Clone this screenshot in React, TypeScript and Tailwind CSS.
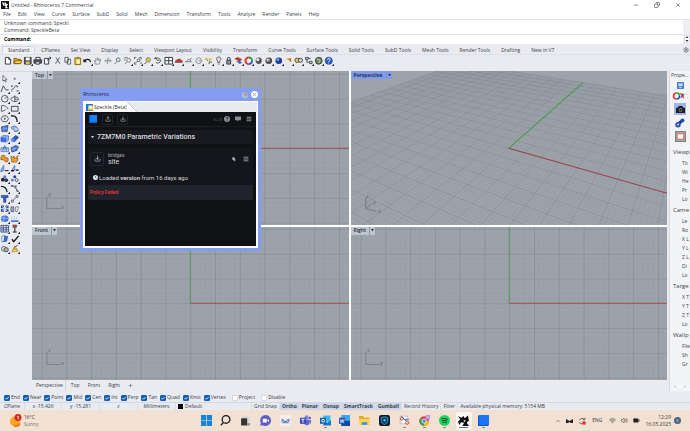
import type { ReactNode } from "react";
import { Battery, ChevronUp, Copy, Download, Menu, Minus, Plus, Settings, Upload, Volume2, Wifi, X } from "lucide-react";

const menus = ["File", "Edit", "View", "Curve", "Surface", "SubD", "Solid", "Mesh", "Dimension", "Transform", "Tools", "Analyze", "Render", "Panels", "Help"];

const toolTabs = ["Standard", "CPlanes", "Set View", "Display", "Select", "Viewport Layout", "Visibility", "Transform", "Curve Tools", "Surface Tools", "Solid Tools", "SubD Tools", "Mesh Tools", "Render Tools", "Drafting", "New in V7"];

const osnaps = ["End", "Near", "Point", "Mid", "Cen", "Int", "Perp", "Tan", "Quad", "Knot", "Vertex", "Project", "Disable"];

// Short labels, the panel is collapsed to its narrowest width.
const properties = [
    { title: "Viewp", rows: ["Tit", "Wi", "He", "Pr", "Lo"] },
    { title: "Came", rows: ["Le", "Ro", "X L", "Y L", "Z L", "Di", "Lo"] },
    { title: "Targe", rows: ["X T", "Y T", "Z T", "Lo"] },
    { title: "Wallp", rows: ["File", "Sh", "Gr"] },
];

const INK = "#33373d";
const BLUE = "#2450b8";
const SKY = "#8fb2ee";

/* ---------- toolbar glyphs, each on a 10x10 grid ---------- */

interface Glyph {
    name: string;
    art: ReactNode;
    flyout?: boolean;
}

const standardTools: Glyph[] = [
    { name: "New", art: <path d="M2.5 1.5h3.5l2 2v5h-5.500zM6 1.500v2h2" fill="#fff" stroke={INK} /> },
    { name: "Open", art: <><path d="M1 8V2.500h3l1 1h3V8z" fill="#e8a820" stroke="#8a5c0c" /><path d="M1 8l1.500-3h7L8 8z" fill="#ffd45e" stroke="#8a5c0c" /></> },
    { name: "Save", flyout: true, art: <><path d="M1.500 1.500h7v7h-7z" fill="#5d636c" stroke={INK} /><path d="M3 1.500h4v3H3z" fill="#fff" /><path d="M3 6h4v2.500H3z" fill="#e6bd4a" /></> },
    { name: "Print", art: <><path d="M3 4V1.500h4.500V4" fill="#fff" stroke={INK} /><path d="M1 4h8v3.500H1z" fill="#555a61" stroke={INK} /><path d="M3 6h4v2.500H3z" fill="#fff" stroke={INK} /></> },
    { name: "Export", art: <><path d="M1.500 2.500H6v6H1.500z" fill="#fff" stroke={INK} /><path d="M5 5c0-2 1-3 3-3M7 .8L8.500 2 7 3.500" fill="none" stroke={INK} /></> },
    { name: "Cut", art: <path d="M3 1.500l4 6M7 1.500l-4 6M2.500 7.500h1M6.500 7.500h1" fill="none" stroke={INK} strokeWidth=".8" /> },
    { name: "Copy", art: <path d="M2 1.500h3.500v5H2zM4.500 3.500H8v5H4.500z" fill="#fff" stroke={INK} strokeWidth=".8" /> },
    { name: "Paste", art: <><path d="M2 2h6v7H2z" fill="#edc747" stroke="#8a6a16" /><path d="M3.500 1h3v1.500h-3z" fill="#777" /><path d="M4 4h3v4H4z" fill="#fff7c8" /></> },
    { name: "Undo", flyout: true, art: <path d="M1 3.500v2.500h2.500M1.500 5.500C3.500 2.500 7.500 3 8 6.500" fill="none" stroke="#111" strokeWidth="1.200" /> },
    { name: "Pan", art: <path d="M2.500 8.500L1.500 5l1.500.5V2.500M4.500 5V1.500M6 5V2M7.500 5V3v3L6.500 8.500h-4" fill="none" stroke="#777" strokeWidth=".8" /> },
    { name: "Rotate view", art: <path d="M2 5h6.500M5.500 1.500L4.500 8.500M7 3.500L8.500 5 7 6.500M3 6L2 5l1-1" fill="none" stroke="#777" strokeWidth=".8" /> },
    { name: "Zoom", art: <path d="M4 6L1.500 8.500M7.500 4a2 2 0 1 1-4 0 2 2 0 1 1 4 0" fill="#dfe5ee" stroke="#666" /> },
    { name: "Zoom window", flyout: true, art: <path d="M2 5V1.500h3M4.500 6L2 8.500M8 4.500a2 2 0 1 1-4 0 2 2 0 1 1 4 0" fill="none" stroke="#666" strokeWidth=".8" /> },
    { name: "Zoom extents", flyout: true, art: <path d="M1.500 3.500v-2h2M6.500 1.500h2v2M3.500 8.500h-2v-2M4.500 5.500l-2 2M7.500 4.500a1.500 1.500 0 1 1-3 0 1.500 1.500 0 1 1 3 0M8.500 6.500v2" fill="none" stroke="#444" strokeWidth=".8" /> },
    { name: "Zoom selected", flyout: true, art: <><path d="M4 6L1.500 8.500" stroke="#444" /><circle cx="5.500" cy="4" r="2.300" fill="#f5c748" stroke="#777" /></> },
    { name: "Undo view", flyout: true, art: <path d="M1 3l2-1.500L4 4M2 3c3-2 6 0 6 2S5 8 3 7M4 4.500h3" fill="none" stroke="#444" strokeWidth=".9" /> },
    { name: "Four viewports", flyout: true, art: <><path d="M1 1.500h8v7H1z" fill="#fff" stroke={INK} /><path d="M5 1.500v7M1 5h8" stroke={INK} /></> },
    { name: "Set CPlane", flyout: true, art: <><path d="M1 6l1-2h1.500l1-1.200h2L8 4.500h1V6z" fill="#cf2c1e" /><path d="M1 6.500h8" stroke="#333" /></> },
    { name: "Named views", flyout: true, art: <path d="M1 6h7M3 5l2-1.500L7.500 5M6 3.500l2-1" fill="none" stroke="#777" /> },
    { name: "Circle centre", flyout: true, art: <path d="M8 5a3 3 0 1 1-6 0 3 3 0 1 1 6 0M4.500 5h3" fill="none" stroke="#777" strokeWidth=".8" /> },
    { name: "Lights", flyout: true, art: <><path d="M1.500 3l3 2M6.500 5L5 8.500" stroke="#555" /><circle cx="2.500" cy="3" r="1.200" fill="#e7bd3b" /><circle cx="6.500" cy="3.500" r="1.500" fill="#e7bd3b" /><circle cx="7.500" cy="6.500" r="1" fill="#7ca0d8" /></> },
    { name: "Spotlight", flyout: true, art: <path d="M5 1a2.200 2.200 0 0 1 1 4.200V7H4V5.200A2.200 2.200 0 0 1 5 1zM4 8.500h2" fill="#ddd" stroke="#666" /> },
    { name: "Lock", flyout: true, art: <><path d="M3.500 4.500V3a1.500 1.500 0 0 1 3 0v1.500" fill="none" stroke={INK} /><path d="M3 4.500h4v4H3z" fill="#999" stroke={INK} /></> },
    { name: "Layers", flyout: true, art: <><path d="M1 3l3-1.500 4 2-2 2z" fill="#d8352a" stroke="#6a1410" strokeWidth=".5" /><path d="M2.500 5.500L6 5l2.500 2-2.500 1.500z" fill="#3269d6" /><path d="M2 4.500L4 6l-1 1z" fill="#f0b429" /></> },
    { name: "Colors", flyout: true, art: <><path d="M5 1.500A3.500 3.500 0 0 1 8.500 5" stroke="#2b9c38" fill="none" strokeWidth="2" /><path d="M8.500 5A3.500 3.500 0 0 1 5 8.500" stroke="#2450d8" fill="none" strokeWidth="2" /><path d="M5 8.500A3.500 3.500 0 0 1 5 1.500" stroke="#df3325" fill="none" strokeWidth="2" /><circle cx="5" cy="5" r="2" fill="#fff" /></> },
    { name: "Shade", flyout: true, art: <><circle cx="5" cy="5" r="3.300" fill="#555" /><circle cx="4" cy="3.800" r="1.700" fill="#e4e4e4" /></> },
    { name: "Render", flyout: true, art: <><circle cx="5" cy="5" r="3.500" fill="#444" /><circle cx="4.300" cy="4.300" r="2.200" fill="#8f8f8f" /><circle cx="3.800" cy="3.800" r="1" fill="#eee" /></> },
    { name: "Render preview", flyout: true, art: <><circle cx="5" cy="5" r="3.500" fill="#153f9c" /><circle cx="4" cy="3.800" r="1.500" fill="#7fa8ff" /></> },
    { name: "Flag", flyout: true, art: <><path d="M1.500 2.500h3L8 2l-1 4-2-1.500z" fill="#e0a52c" /><path d="M5.500 2.500L7.500 6" stroke="#bd2b20" /></> },
    { name: "Options", flyout: true, art: <><circle cx="3.300" cy="4.500" r="2.300" fill="#e6ce70" stroke="#5b4c1c" /><circle cx="6.800" cy="4.500" r="2.200" fill="#d5d5d5" stroke="#444" /></> },
    { name: "Grasshopper", flyout: true, art: <path d="M1.500 1.500h3v2h-3zM3 3.500v3h3M6 5.500h2.500v2.500H6zM4.500 2.500H7" fill="none" stroke={INK} strokeWidth=".9" /> },
    { name: "Camera", flyout: true, art: <><circle cx="5" cy="5" r="3.600" fill="#6d8562" stroke="#39462f" /><path d="M3 3l3.500 1.500L5 7.500" stroke="#b9d0ab" fill="none" /></> },
    { name: "Help", flyout: true, art: <><circle cx="5" cy="5" r="3.800" fill="#2b5bc7" stroke="#173a86" strokeWidth=".6" /><path d="M3.700 4c0-2 2.800-1.800 2.600-.2C6.200 4.800 5 4.700 5 6M5 7v.8" stroke="#fff" fill="none" /></> },
];

const cube = <><path d="M1 3.500L3.500 1.500 9 2v4.500L6.500 8.500 1 8z" fill={SKY} stroke={BLUE} strokeWidth=".6" /><path d="M1 3.500l5.500.5v4.500L1 8z" fill="#3b6bd6" /></>;

const sideTools: Glyph[] = [
    { name: "Select", art: <path d="M3 1.500v6l1.500-1.200L5.500 8.500l1-.5-1-2h2z" fill="#fff" stroke={INK} strokeWidth=".7" /> },
    { name: "Point", flyout: true, art: <circle cx="5" cy="5" r=".8" fill="none" stroke={INK} strokeWidth=".6" /> },
    { name: "Polyline", flyout: true, art: <path d="M1 8.500L3.500 2l3 4.500 2.500-.5" fill="none" stroke={INK} strokeWidth=".9" /> },
    { name: "Curve", flyout: true, art: <><path d="M2 8C1 4 4 6 4.500 4S7 1 8 2.500" fill="none" stroke={INK} strokeWidth=".8" /><path d="M1 1.500h2v1.500H1zM7 6.500h2V8H7zM7 2h1.500v1.500H7z" fill="#555" /></> },
    { name: "Circle", flyout: true, art: <path d="M8.500 5a3.500 3.500 0 1 1-7 0 3.500 3.500 0 1 1 7 0M5 5l2-2" fill="none" stroke={INK} strokeWidth=".8" /> },
    { name: "Ellipse", flyout: true, art: <path d="M9 5.500c0 1.500-2 2.500-4 2.500S1 7 1 5.500 3 3 5 3s4 1 4 2.500M5 1.500V8M5 5.500h3" fill="none" stroke={INK} strokeWidth=".8" /> },
    { name: "Arc", flyout: true, art: <path d="M2 1.500c4 0 6 2 6.500 4M2 8l4-2M1.500 1.500V8" fill="none" stroke={INK} strokeWidth=".8" /> },
    { name: "Rectangle", flyout: true, art: <path d="M1.500 2.500h7v5h-7z" fill="none" stroke={INK} strokeWidth=".9" /> },
    { name: "Polygon", flyout: true, art: <path d="M3 2h4l2 3-2 3H3L1 5zM4 5h2M5 4v2" fill="none" stroke={INK} strokeWidth=".8" /> },
    { name: "Fillet curves", flyout: true, art: <path d="M1 2h2c3 0 4.500 2 4.500 6.500" fill="none" stroke="#111" strokeWidth="1.300" /> },
    { name: "Surface from points", flyout: true, art: <><path d="M1.500 3L8.500 1.500 7.500 8 2 8z" fill="#4d7be0" stroke="#222" strokeWidth=".6" /><path d="M4 2.500v5.500M2 5.500l6-1" stroke={SKY} strokeWidth=".6" /></> },
    { name: "Sweep", flyout: true, art: <><path d="M1 4c2-3 6-2 7.500 1v2.500L5 8c0-2-2-2-4-4z" fill={SKY} stroke="#33558e" strokeWidth=".6" /><path d="M5 5l3 .5" stroke="#fff" /></> },
    { name: "Box", flyout: true, art: cube },
    { name: "Sphere chain", flyout: true, art: <><path d="M1 6l5-4.500L9 3.500 4.500 8.500z" fill="#2c57c0" stroke="#142e6e" strokeWidth=".6" /><circle cx="3" cy="6.500" r="2" fill="#5e8cec" /></> },
    { name: "SubD", flyout: true, art: <><path d="M1 4h8v4H1z" fill="#a7c0ee" stroke="#4b6fb5" strokeWidth=".7" /><path d="M3 6.500L5 1.500l2 5M3 4h4" stroke="#335ea8" fill="none" strokeWidth=".7" /></> },
    { name: "Mesh", flyout: true, art: <><path d="M1 4L6 1.500 9 3 7 7 2 8.500z" fill="#4774d4" stroke="#1c3268" strokeWidth=".6" /><path d="M3 3l2 4M2 6l5-2" stroke="#c5d6fa" strokeWidth=".6" /></> },
    { name: "Join", flyout: true, art: <path d="M2 1.500h3v2l3.500 1v3L6 8.500 3.500 6H1V3.500z" fill="#ee9a25" stroke="#6e4b16" strokeWidth=".7" /> },
    { name: "Explode", flyout: true, art: <path d="M1 2l2 2 1-2 1 3 3.500-3.500L7 5h1.500L7 8.500H2z" fill="#f0a52c" stroke="#8a3d12" strokeWidth=".7" /> },
    { name: "Trim", flyout: true, art: <><path d="M4 1.500v5L1 8.500V6z" fill={SKY} stroke={BLUE} strokeWidth=".6" /><path d="M5 7h4" stroke="#111" /></> },
    { name: "Split", flyout: true, art: <><path d="M5 1.500v5L2.500 8V5.500z" fill={SKY} stroke={BLUE} strokeWidth=".6" /><path d="M1 7h3M6 6.500h3" stroke="#111" strokeWidth="1.300" /></> },
    { name: "Group", flyout: true, art: <><circle cx="3" cy="6" r="2" fill="#222" /><circle cx="6.500" cy="6.500" r="2" fill="#25386a" /><circle cx="5" cy="3" r="1.600" fill="#5679c8" /></> },
    { name: "Ungroup", flyout: true, art: <><circle cx="2.500" cy="6.500" r="1.400" fill="#4c77d4" /><circle cx="7" cy="6.500" r="1.500" fill="none" stroke={INK} strokeWidth=".8" /><circle cx="5" cy="3" r="1.600" fill="#27438c" /></> },
    { name: "Edit points", flyout: true, art: <path d="M1 2.500c4 0 6 2 6.500 6" fill="none" stroke="#111" strokeWidth="1.200" /> },
    { name: "Control points", flyout: true, art: <><path d="M2 2c3 0 4 2 6 6" fill="none" stroke={INK} /><path d="M1 1h2v2H1zM5 1.500h2v2H5zM7 6.500h2v2H7z" fill="#666" /></> },
    { name: "Text", flyout: true, art: <path d="M1.500 1.500h7v2.200H6.200v5H3.800v-5H1.500z" fill="#2f5fce" stroke="#17346f" strokeWidth=".6" /> },
    { name: "Dimension", flyout: true, art: <><path d="M3 7l4-4" stroke={INK} strokeWidth=".7" /><path d="M1.500 6.500h2v2h-2zM6.500 1.500h2v2h-2z" fill="#fff" stroke={INK} strokeWidth=".7" /></> },
    { name: "Blocks", flyout: true, art: <><path d="M1 1.500h3v3H1zM6 1.500h3v3H6zM1 5.500h3v3H1zM6 5.500h3v3H6z" fill="#27438c" /><path d="M2 2l6 6M8 2L2 8" stroke="#bcd0f5" /></> },
    { name: "Array", flyout: true, art: <><path d="M1 3h3v5H1z" fill="#8fa9dc" stroke={INK} strokeWidth=".6" /><path d="M6 3h3L7.500 8H6z" fill="#fff" stroke={INK} strokeWidth=".6" /></> },
    { name: "Cage", flyout: true, art: <><ellipse cx="5" cy="5" rx="4" ry="3.500" fill="#3f71d8" /><path d="M1 4.500h8M4 1.500v7" stroke="#9fbcf5" /></> },
    { name: "Heightfield", flyout: true, art: <><path d="M1 7.500h8" stroke="#2d5fd0" strokeWidth="1.500" /><path d="M2 5.500V3M4.500 5.500V2M7 5.500V3" stroke="#8aa5da" strokeDasharray="1 1" /></> },
    { name: "Grid", flyout: true, art: <><path d="M1 1.500h8v7H1z" fill="#e8effc" stroke="#22396e" strokeWidth=".8" /><path d="M3.500 1.500v7M6.500 1.500v7M1 4h8M1 6.200h8" stroke="#22396e" strokeWidth=".8" /></> },
    { name: "Align", flyout: true, art: <><path d="M3 1h4v2.500H3z" fill="#c8452d" stroke="#444" strokeWidth=".5" /><path d="M5 3v5M3 8.500h4" stroke="#555" strokeWidth="1.500" /></> },
    { name: "Bend", flyout: true, art: <><path d="M2 2.500l3-1v6l-3 1z" fill="#fff" stroke="#315eb8" strokeWidth=".7" /><path d="M5 2.500h3l-1 5-3 .5z" fill="#3d70dc" stroke="#173a86" strokeWidth=".6" /></> },
    { name: "Check", flyout: true, art: <path d="M2 5.500L4 8l5-6" fill="none" stroke="#111" strokeWidth="1.400" /> },
    { name: "Boolean", flyout: true, art: <><circle cx="4" cy="5" r="2.500" fill="#ddd" stroke={INK} strokeWidth=".7" /><circle cx="6.500" cy="6" r="2.300" fill="#aaa" stroke={INK} strokeWidth=".7" /></> },
    { name: "Cone", flyout: true, art: <><path d="M5 2l3.500 5.500L2 8.500z" fill="#f0a52c" stroke="#8a5c0c" strokeWidth=".6" /><path d="M6 3l2-2" stroke="#333" /><path d="M2 8l3-2 3 1.500" fill="#fbe08a" /></> },
];

const taskApps: Glyph[] = [
    { name: "Start", art: <path d="M0 0h4.700v4.700H0zM5.300 0H10v4.700H5.300zM0 5.300h4.700V10H0zM5.300 5.300H10V10H5.300z" fill="#1583d8" /> },
    { name: "Search", art: <path d="M9 4a3.500 3.500 0 1 1-7 0 3.500 3.500 0 1 1 7 0M3 6.800L.8 9.300" fill="none" stroke="#1d1d1d" strokeWidth="1.200" /> },
    { name: "Task view", art: <><path d="M2.500 1H9v7H2.500z" fill="#d8d8d8" /><path d="M1 3h5.500v6.500H1z" fill="#333" /><path d="M6.500 7.500H9v2H6.500z" fill="#888" /></> },
    { name: "Chat", art: <><path d="M5 0a5 5 0 1 1-2.500 9.300L.3 9.800.8 7.500A5 5 0 0 1 5 0z" fill="#5b5fc7" /><path d="M2.500 3.300h3.700v3.500H2.500zM6.500 5l1.700-1.200v2.600z" fill="#fff" /></> },
    { name: "Mail", art: <><rect width="10" height="10" rx="1" fill="#f3f0f4" /><path d="M1.500 3v4.500h7V3L5 5.500z" fill="#7384b8" /><path d="M1.500 7.500L4 5M8.500 7.500L6 5" stroke="#fff" strokeWidth=".6" /></> },
    { name: "Teams", art: <><circle cx="6" cy="2" r="1.700" fill="#7b83eb" /><circle cx="8.800" cy="2.800" r="1.100" fill="#5059c9" /><path d="M4 4h4.500v3.500C8.500 10 4 10 4 7.500zM8.700 4.500H10v3L8.700 8z" fill="#6169d4" /><rect y="2.500" width="5.500" height="5.500" fill="#4049b0" /><path d="M1.200 4h3M2.700 4v3" stroke="#fff" strokeWidth=".8" /></> },
    { name: "Outlook", flyout: true, art: <><path d="M3 .5h6.500V6H3z" fill="#35b8f1" /><path d="M3 4.500l3.500 2.500L10 4.500v5H3z" fill="#1877c8" /><rect y="2.500" width="5.500" height="5.500" fill="#0f62b0" /><circle cx="2.800" cy="5.200" r="1.300" fill="none" stroke="#fff" strokeWidth=".8" /></> },
    { name: "Word", art: <><path d="M2 0h8v5H2z" fill="#41a5ee" /><path d="M2 5h8v5H2z" fill="#124aa8" /><rect y="2.500" width="5.500" height="5.500" fill="#185abd" /><path d="M1 4l.9 3 .9-3 .9 3 .9-3" stroke="#fff" fill="none" strokeWidth=".6" /></> },
    { name: "Explorer", art: <><path d="M0 1h3.500l1 1.200H9.500V9H0z" fill="#eba720" /><path d="M0 3.500h10V9H0z" fill="#ffd45a" /><path d="M2.500 6.500h5V9h-5z" fill="#3b97dc" /></> },
    { name: "Defender", art: <><rect width="10" height="10" rx="2" fill="#0b1b2c" /><path d="M5 1.500L8 2.500V5c0 2-1.500 3-3 3.700C3.500 8 2 7 2 5V2.500z" fill="#143c5e" stroke="#28a9d9" strokeWidth=".8" /><circle cx="5" cy="4.800" r="1" fill="#4fe0ff" /></> },
    { name: "Snipping", flyout: true, art: <><rect x="1" y="1" width="7" height="7" fill="#fff" stroke="#97a1ac" strokeWidth=".5" /><path d="M2 1l5 5M4.500 4L9 4" stroke="#4c8fd0" /><circle cx="7.500" cy="7" r="1.500" fill="none" stroke="#d9422f" strokeWidth=".8" /><circle cx="2.500" cy="3.500" r="1.300" fill="none" stroke="#d9422f" strokeWidth=".8" /></> },
    { name: "Chrome", flyout: true, art: <><circle cx="4.700" cy="5.500" r="4.400" fill="#ea4335" /><path d="M4.700 5.500L.8 3.500A4.400 4.400 0 0 0 4.500 9.900z" fill="#34a853" /><path d="M4.700 5.500h4.400a4.400 4.400 0 0 1-4.600 4.400z" fill="#fbbc05" /><circle cx="4.700" cy="5.500" r="1.900" fill="#4285f4" stroke="#fff" strokeWidth=".7" /><circle cx="8" cy="2" r="2" fill="#c9b2f2" stroke="#8d6bd6" strokeWidth=".6" /></> },
    { name: "Spotify", flyout: true, art: <><circle cx="5" cy="5" r="5" fill="#1ed760" /><path d="M2.200 3.500c2-.6 4-.4 5.800.5M2.600 5.200c1.600-.5 3.400-.3 4.900.5M3 6.800c1.300-.4 2.700-.2 3.900.5" fill="none" stroke="#123" strokeWidth=".8" /></> },
    { name: "Rhinoceros", flyout: true, art: <><rect width="10" height="10" fill="#fff" /><path d="M0 1l3 1.500L5 1l1 2 3-2.500L10 5 8 7l2 3H4L5.500 7 3 6.500 1 9 0 6l2-2z" fill="#111" /><path d="M5 4.500l2 .5-1 1.500z" fill="#fff" /></> },
    { name: "Speckle", flyout: true, art: <><path d="M0 1l1-1h9v9l-1 1H0z" fill="#0a54d0" /><path d="M1 0h9v9H1z" fill="#1a76f5" /></> },
];

function RhinoMark() {
    return (
        <svg viewBox="0 0 10 10" className="size-[8px]">
            <rect width="10" height="10" fill="#111" />
            <path d="M1 1l3 2 1-2 1.500 2.500L9 4 7 6.500 9 9H5l1-2.500L3 6z" fill="#fff" />
            <path d="M4 3.500l1.500 1L4.500 6z" fill="#111" />
        </svg>
    );
}

function ToolButton({ name, art, flyout }: Glyph) {
    return (
        <button type="button" aria-label={name} className="size-[10px] shrink-0">
            <svg viewBox="0 0 10 10" className="size-[10px]">
                <g transform="scale(.95)">{art}</g>
                {flyout && <path d="M10 7.800V10H7.800z" fill="#222" />}
            </svg>
        </button>
    );
}

/* ---------- viewports ---------- */

const MAJOR = 24.7;

function FlatGrid({ id, originY, vertical }: { id: string; originY: number; vertical: string }) {
    const minor = MAJOR / 5;
    const minorLines = [1, 2, 3, 4].map((n) => `M${n * minor} 0V${MAJOR}M0 ${n * minor}H${MAJOR}`).join("");

    return (
        <svg viewBox="0 0 317 153" preserveAspectRatio="xMidYMid slice" className="col-start-1 row-start-1 h-full w-full">
            <defs>
                <pattern id={id} x="158.500" y={originY} width={MAJOR} height={MAJOR} patternUnits="userSpaceOnUse">
                    <path d={minorLines} stroke="#939aa2" strokeWidth=".5" />
                    <path d={`M0 0H${MAJOR}M0 0V${MAJOR}`} stroke="#7f868e" strokeWidth="1.200" />
                </pattern>
            </defs>
            <rect width="317" height="153" fill={`url(#${id})`} />
            <path d={`M158.500 ${originY}V0`} stroke="#4b9b50" />
            <path d={`M158.500 ${originY}H317`} stroke="#a34b50" />
            <path d="M15.500 125V137H29" fill="none" stroke="#747b83" strokeWidth=".8" />
            <text x="17" y="125" fontSize="5" fill="#565c64">{vertical}</text>
            <text x="30" y="138" fontSize="5" fill="#565c64">{id === "right" ? "y" : "x"}</text>
        </svg>
    );
}

// Projects a construction plane point (-1..1 on both axes) through the two vanishing points.
function project(x: number, y: number) {
    const a = -0.355 * x;
    const b = 0.607 * y;
    const w = 1 + a + b;
    const px = (158 - 449 * a + 354 * b) / w;
    const py = (77 - 96 * a - 96 * b) / w;
    return `${px.toFixed(1)} ${py.toFixed(1)}`;
}

function gridPath(step: (n: number) => boolean) {
    let d = "";
    for (let n = -70; n <= 70; n++) {
        if (!step(n)) continue;
        const t = n / 70;
        d += `M${project(t, -1)}L${project(t, 1)}M${project(-1, t)}L${project(1, t)}`;
    }
    return d;
}

function PerspectiveGrid() {
    return (
        <svg viewBox="0 0 317 153" preserveAspectRatio="xMidYMid slice" className="col-start-1 row-start-1 h-full w-full">
            <path d={gridPath((n) => n % 5 !== 0)} stroke="#8f969e" strokeWidth=".3" />
            <path d={gridPath((n) => n % 5 === 0)} stroke="#80878f" strokeWidth=".5" />
            <path d={`M${project(0, 0)}L${project(0, 1)}`} stroke="#449b48" />
            <path d={`M${project(0, 0)}L${project(1, 0)}`} stroke="#a04046" />
            <path d="M15.500 126V137L26 140M15.500 137L22 132" fill="none" stroke="#6b7179" strokeWidth=".8" />
            <text x="16" y="127" fontSize="5" fill="#565c64">z</text>
            <text x="23" y="133" fontSize="5" fill="#565c64">y</text>
            <text x="28" y="142" fontSize="5" fill="#565c64">x</text>
        </svg>
    );
}

function Viewport({ title, active, children }: { title: string; active?: boolean; children: ReactNode }) {
    return (
        <section className="grid min-h-0 min-w-0 grid-cols-1 grid-rows-1 overflow-hidden bg-[#9ca3ab]">
            {children}
            <button
                type="button"
                className={`col-start-1 row-start-1 flex h-[8px] items-center gap-[3px] self-start justify-self-start pl-[3px] text-[#2c3036] ${active ? "bg-[#7f9bf3] font-bold" : "bg-[#bcc4cd] font-semibold"}`}
            >
                {title}
                <span className="flex h-[8px] w-[6px] items-center justify-center border-l border-[#8c949e]">
                    <svg viewBox="0 0 4 3" className="w-[3px]"><path d="M0 0h4L2 3z" fill="#333" /></svg>
                </span>
            </button>
        </section>
    );
}

/* ---------- Speckle connector window ---------- */

function SpeckleWindow() {
    return (
        <div role="dialog" aria-label="Rhinoceros" className="absolute top-[17px] left-[48px] flex h-[163px] w-[181px] flex-col bg-[#849df1] px-[3px] pb-[3px]">
            <header className="flex h-[13px] shrink-0 items-center gap-[3px] text-[#20263c]">
                <h2 className="flex-1">Rhinoceros</h2>
                <button type="button" aria-label="Settings" className="flex size-[6px] items-center justify-center rounded-full bg-[#c6c8d2]">
                    <Settings size={5} color="#777" />
                </button>
                <button type="button" aria-label="Close" className="flex size-[7px] items-center justify-center rounded-full bg-white">
                    <X size={5} color="#555" />
                </button>
            </header>
            <div className="flex min-h-0 flex-1 flex-col border border-white bg-[#e9eaee]">
                <div className="flex h-[10px] shrink-0 items-center">
                    <span className="flex h-full items-center gap-[1px] bg-white pl-[2px] text-[#333]">
                        <svg viewBox="0 0 10 10" className="size-[7px]"><rect width="10" height="10" fill="#1777ee" /><rect x="3" y="2" width="7" height="7" fill="#f2c53b" /><circle cx="6.500" cy="5" r="2" fill="#fff" /></svg>
                        Speckle (Beta)
                    </span>
                    <svg viewBox="0 0 10 10" className="h-full w-[10px]"><path d="M0 0l10 10H0z" fill="#fff" /><path d="M0 0l10 10" stroke="#c7cad0" /></svg>
                </div>
                <main className="flex min-h-0 flex-1 flex-col border-x border-b border-white bg-[#101114] font-['Roboto','Open_Sans',sans-serif] text-[#d7d9de]">
                    <div className="flex h-[15px] shrink-0 items-center gap-[5px] border-b border-[#1d1f25] px-[4px] text-[#8b8e96]">
                        <svg viewBox="0 0 10 10" className="size-[8px]"><path d="M0 1l1-1h9v9l-1 1H0z" fill="#0b5cd6" /><path d="M1.500 0H10v8.500H1.500z" fill="#1683ff" /></svg>
                        <div className="flex flex-1 gap-[4px] text-[#d7d9de]">
                            <button type="button" aria-label="Publish" className="flex size-[11px] items-center justify-center rounded-[2px] border border-[#24262d]"><Upload size={6} /></button>
                            <button type="button" aria-label="Load" className="flex size-[11px] items-center justify-center rounded-[2px] border border-[#24262d]"><Download size={6} /></button>
                        </div>
                        <div className="flex items-center gap-[2px] text-[4px] text-[#62656d]">
                            3.2.0
                            <button type="button" aria-label="Help" className="flex size-[6px] items-center justify-center rounded-full bg-[#8b8e96] text-[5px] font-bold text-[#101114]">?</button>
                        </div>
                        <button type="button" aria-label="Feedback">
                            <svg viewBox="0 0 10 10" className="size-[6px]"><path d="M0 1h10v6H6L4 9.500V7H0z" fill="#8b8e96" /></svg>
                        </button>
                        <button type="button" aria-label="Menu"><Menu size={6} strokeWidth={4} /></button>
                    </div>
                    <div className="flex flex-col gap-[4px] px-[3px] pt-[3px]">
                        <button type="button" className="flex h-[14px] items-center gap-[3px] rounded-[2px] bg-[#191a20] px-[3px] text-[7px] font-medium">
                            <svg viewBox="0 0 4 3" className="w-[3px]"><path d="M0 0h4L2 3z" fill="#d7d9de" /></svg>
                            7ZM7M0 Parametric Variations
                        </button>
                        <article className="flex flex-col rounded-[2px] bg-[#15161b]">
                            <div className="flex h-[21px] items-center gap-[4px] px-[2px]">
                                <button type="button" aria-label="Load model" className="flex size-[14px] items-center justify-center rounded-[3px] border border-[#272932]"><Download size={7} /></button>
                                <div className="flex flex-1 flex-col">
                                    <span className="text-[5px] leading-[6px] text-[#a9acb4]">bridges</span>
                                    <span className="text-[7px] leading-[8px]">site</span>
                                </div>
                                <button type="button" aria-label="Highlight">
                                    <svg viewBox="0 0 10 10" className="size-[6px]"><circle cx="4" cy="4" r="2.500" fill="#8b8e96" /><path d="M4 3l4 4-2 .5L5 9.500z" fill="#d7d9de" /></svg>
                                </button>
                                <button type="button" aria-label="Model menu" className="mx-[2px] text-[#8b8e96]"><Menu size={6} strokeWidth={4} /></button>
                            </div>
                            <p className="flex h-[16px] items-center gap-[1px] pl-[5px] text-[6px]">
                                <svg viewBox="0 0 10 10" className="size-[5px]"><circle cx="5" cy="5" r="5" fill="#e3e5ea" /><path d="M5 2v3l2 1.500" fill="none" stroke="#15161b" /></svg>
                                <span>Loaded <b className="font-semibold">version</b> from 16 days ago</span>
                            </p>
                            <p className="flex h-[15px] items-center rounded-b-[2px] bg-[#22242d] pl-[2px] text-[5px] font-medium text-[#e8393d]">Policy Failed</p>
                        </article>
                    </div>
                </main>
            </div>
        </div>
    );
}

/* ---------- properties panel ---------- */

function PropertiesPanel() {
    return (
        <aside className="flex w-[21px] shrink-0 flex-col overflow-hidden border-l border-[#d8dbe3] bg-[#f3f4f7] whitespace-nowrap text-[#3c3f45]">
            <h2 className="pt-[1px] pl-[1px]">Prope...</h2>
            <div className="flex flex-col items-center gap-[3px] pt-[3px]">
                <svg viewBox="0 0 10 10" className="size-[7px]"><rect width="10" height="10" rx="1" fill="#4778d8" /><path d="M2 2h6v4H2z" fill="#c9dcff" /><path d="M3 8h4" stroke="#fff" /></svg>
                <svg viewBox="0 0 16 8" className="h-[8px] w-[17px]">
                    <path d="M4 1a3 3 0 0 1 3 3" fill="none" stroke="#2ba443" strokeWidth="1.500" />
                    <path d="M7 4a3 3 0 0 1-3 3" fill="none" stroke="#2649d4" strokeWidth="1.500" />
                    <path d="M4 7a3 3 0 0 1 0-6" fill="none" stroke="#e03225" strokeWidth="1.500" />
                    <path d="M7 1l5 1-1 5z" fill="#cf4a34" /><path d="M8 6l3-4" stroke="#274da8" />
                    <circle cx="13.500" cy="4" r="2.200" fill="#fff" stroke="#bbb" strokeWidth=".5" />
                </svg>
                <button type="button" aria-label="Camera" className="flex size-[12px] items-center justify-center bg-[#9fb5f0]">
                    <svg viewBox="0 0 10 10" className="size-[9px]"><path d="M0 3h2l1-2h4l1 2h2v6H0z" fill="#1b1d22" /><circle cx="5" cy="5.500" r="2.200" fill="#777" /><circle cx="5" cy="5.500" r="1.100" fill="#1b1d22" /></svg>
                </button>
                <svg viewBox="0 0 10 10" className="size-[10px]"><path d="M2.500 7l5-5" stroke="#17306e" strokeWidth="3" /><circle cx="3" cy="6.800" r="2.700" fill="#2450b8" /><circle cx="7.500" cy="2.500" r="2" fill="#2450b8" /><circle cx="3" cy="6.500" r="1" fill="#cfdcf7" /></svg>
                <svg viewBox="0 0 10 10" className="size-[11px]"><rect x=".5" y=".5" width="9" height="9" fill="#a9adb5" stroke="#7d828b" /><rect x="2" y="2.500" width="6" height="5" fill="#fff" stroke="#e86b50" /></svg>
            </div>
            <div className="flex flex-1 flex-col pt-[4px]">
                {properties.map((group) => (
                    <section key={group.title}>
                        <h3 className="h-[13px] pl-[3px] text-[6px] leading-[13px]">{group.title}</h3>
                        {group.rows.map((row) => (
                            <p key={row} className="h-[9px] pl-[12px] leading-[9px]">{row}</p>
                        ))}
                    </section>
                ))}
            </div>
            <div className="flex h-[10px] items-center justify-around text-[6px] text-[#888]">
                <span>‹</span>
                <span>›</span>
            </div>
        </aside>
    );
}

function StatusToggle({ children, on }: { children: ReactNode; on?: boolean }) {
    return (
        <button type="button" className={`border-r border-[#d9dde6] px-[2px] ${on ? "bg-[#ccd7ea] font-bold" : ""}`}>
            {children}
        </button>
    );
}

export default function App() {
    return (
        <div className="flex h-screen flex-col overflow-hidden bg-[#e9ebf0] font-['Open_Sans','Noto_Sans',sans-serif] text-[5px] leading-[7px] text-[#3a3d42]">
            <header className="bg-white">
                <div className="flex h-[10px] items-center gap-[2px] pl-[1px]">
                    <RhinoMark />
                    <h1 className="flex-1">Untitled - Rhinoceros 7 Commercial</h1>
                    <div className="flex gap-[15px] pr-[9px] text-[#222]">
                        <button type="button" aria-label="Minimize"><Minus size={6} /></button>
                        <button type="button" aria-label="Restore"><Copy size={6} className="-scale-x-100" /></button>
                        <button type="button" aria-label="Close"><X size={6} /></button>
                    </div>
                </div>
                <nav className="flex h-[9px] items-center gap-[7px] pl-[3px]">
                    {menus.map((menu) => (
                        <button key={menu} type="button">{menu}</button>
                    ))}
                </nav>
            </header>

            <div className="flex border-t border-[#dfe2ea] bg-white">
                <div className="flex-1">
                    <div className="border-b border-[#dfe2ea] pl-[4px]">
                        <p>Unknown command: Speckl</p>
                        <p>Command: SpeckleBeta</p>
                    </div>
                    <label className="flex h-[9px] items-center pl-[4px] font-bold text-black">
                        Command:
                        <input type="text" className="ml-[2px] h-[7px] flex-1 font-normal outline-none" />
                    </label>
                </div>
                <div className="flex w-[7px] flex-col items-center justify-end bg-[#eeeff3] pb-[1px]">
                    <svg viewBox="0 0 6 8" className="h-[8px] w-[6px]"><rect x=".5" y=".5" width="5" height="7" fill="#fff" stroke="#bfc4cc" strokeWidth=".5" /><path d="M3 1.200L4.500 3h-3zM3 6.800L4.500 5h-3z" fill="#222" /></svg>
                </div>
            </div>

            <nav className="mt-[2px] flex h-[9px] items-stretch gap-[1px] border-b border-[#dbe1ec]">
                {toolTabs.map((tab, index) => (
                    <button
                        key={tab}
                        type="button"
                        className={`px-[5px] ${index === 0 ? "ml-[2px] border-x border-t border-[#d4d8e1] bg-[#eff1f5]" : ""}`}
                    >
                        {tab}
                    </button>
                ))}
                <button type="button" aria-label="Toolbar options" className="ml-auto pr-[1px]"><Settings size={6} /></button>
            </nav>
            <div className="flex h-[12px] w-[334px] shrink-0 items-center justify-between pl-[3px]">
                {standardTools.map((tool) => <ToolButton key={tool.name} {...tool} />)}
            </div>

            <div className="mt-[4px] flex min-h-0 flex-1">
                <div className="w-[32px] shrink-0 border-t border-[#d4d8e1] pt-[2px]">
                    <div className="grid w-[20px] grid-cols-2">
                        {sideTools.map((tool) => <ToolButton key={tool.name} {...tool} />)}
                    </div>
                </div>

                <div className="relative flex min-w-0 flex-1 flex-col">
                    <div className="grid min-h-0 flex-1 grid-cols-2 grid-rows-2 gap-[2px] bg-white">
                        <Viewport title="Top"><FlatGrid id="top" originY={77} vertical="y" /></Viewport>
                        <Viewport title="Perspective" active><PerspectiveGrid /></Viewport>
                        <Viewport title="Front"><FlatGrid id="front" originY={76} vertical="z" /></Viewport>
                        <Viewport title="Right"><FlatGrid id="right" originY={76} vertical="z" /></Viewport>
                    </div>
                    <nav className="flex h-[11px] shrink-0 items-center gap-[8px] pl-[4px]">
                        <button type="button" className="h-full border-r border-[#d0d4dd] pr-[2px]">Perspective</button>
                        <button type="button" className="-ml-[3px]">Top</button>
                        <button type="button">Front</button>
                        <button type="button">Right</button>
                        <button type="button" aria-label="New layout"><Plus size={5} /></button>
                    </nav>
                    <SpeckleWindow />
                </div>

                <div className="flex w-[23px] shrink-0 justify-end"><PropertiesPanel /></div>
            </div>

            <div role="group" aria-label="Object snaps" className="flex h-[11px] shrink-0 items-end gap-[3px] pb-[1px] pl-[4px]">
                {osnaps.map((snap, index) => (
                    <label key={snap} className={`flex items-center gap-[1px] ${index > 9 ? "mr-[3px]" : ""}`}>
                        <span className="grid size-[6px]">
                            <input
                                type="checkbox"
                                defaultChecked={index < 11}
                                className="peer col-start-1 row-start-1 size-[6px] appearance-none rounded-[1px] border border-[#d5d8df] bg-white checked:border-[#0f5fb8] checked:bg-[#0f5fb8]"
                            />
                            <svg viewBox="0 0 6 6" className="pointer-events-none col-start-1 row-start-1 hidden size-[6px] peer-checked:block">
                                <path d="M1.500 3l1 1.200L4.700 2" fill="none" stroke="#fff" strokeWidth=".8" />
                            </svg>
                        </span>
                        {snap}
                    </label>
                ))}
            </div>

            <div className="flex h-[8px] shrink-0 border-t border-[#d3d8e3] whitespace-nowrap">
                <button type="button" className="w-[25px] border-r border-[#d9dde6]">CPlane</button>
                <span className="w-[37px] border-r border-[#d9dde6] text-center">x -15.426</span>
                <span className="w-[38px] border-r border-[#d9dde6] text-center">y -15.281</span>
                <span className="w-[38px] border-r border-[#d9dde6] text-center">z</span>
                <button type="button" className="w-[38px] border-r border-[#d9dde6]">Millimeters</button>
                <button type="button" className="flex w-[76px] items-center gap-[2px] border-r border-[#d9dde6] pl-[2px]">
                    <span className="size-[5px] bg-black" />
                    Default
                </button>
                <StatusToggle>Grid Snap</StatusToggle>
                <StatusToggle on>Ortho</StatusToggle>
                <StatusToggle on>Planar</StatusToggle>
                <StatusToggle on>Osnap</StatusToggle>
                <StatusToggle on>SmartTrack</StatusToggle>
                <StatusToggle on>Gumball</StatusToggle>
                <StatusToggle>Record History</StatusToggle>
                <StatusToggle>Filter</StatusToggle>
                <span className="pl-[2px]">Available physical memory: 5154 MB</span>
            </div>

            <footer className="grid h-[21px] shrink-0 grid-cols-[1fr_auto_1fr] items-center bg-[#f2e1d3] text-[#3f3834]">
                <button type="button" className="flex items-center gap-[2px] pl-[9px] text-left">
                    <svg viewBox="0 0 13 13" className="size-[13px]">
                        <circle cx="6" cy="7.500" r="5" fill="#f5a524" />
                        <path d="M5 12.500c1.500 0 5-.5 6-3" stroke="#f27a1c" strokeWidth="2" fill="none" />
                        <circle cx="9" cy="3.500" r="3.500" fill="#d32a1e" />
                        <path d="M8.300 2.700L9.200 2v3.500" fill="none" stroke="#fff" strokeWidth=".8" />
                    </svg>
                    <span>16°C<br /><span className="text-[#7c746e]">Sunny</span></span>
                </button>
                <nav className="flex w-[294px] justify-between">
                    {taskApps.map((app) => (
                        <button
                            key={app.name}
                            type="button"
                            aria-label={app.name}
                            className={`flex h-[18px] w-[16px] flex-col items-center justify-center gap-[1px] rounded-[2px] pt-[1px] ${app.name === "Rhinoceros" ? "bg-[#fcf6f0]" : ""}`}
                        >
                            <svg viewBox="0 0 10 10" className="size-[11px]">{app.art}</svg>
                            <span className={`h-[1px] rounded-full ${app.name === "Rhinoceros" ? "w-[9px] bg-[#4d6f94]" : app.flyout ? "w-[3px] bg-[#8a8078]" : "w-[3px]"}`} />
                        </button>
                    ))}
                </nav>
                <div className="flex items-center justify-end gap-[5px] pr-[9px]">
                    <ChevronUp size={6} />
                    <svg viewBox="0 0 10 8" className="h-[6px] w-[7px]"><path d="M0 1l5 3 5-3v6H7L5 5.500 3 7H0z" fill="#222" /></svg>
                    <svg viewBox="0 0 10 10" className="size-[8px]"><path d="M8 3a3.500 3.500 0 0 0-6 1M1.500 6.500a3.500 3.500 0 0 0 4 2M8.500 1v2.500H6" fill="none" stroke="#444" /><circle cx="7.500" cy="7.500" r="2.300" fill="#d93327" /></svg>
                    <span className="px-[1px]">ENG</span>
                    <Wifi size={7} />
                    <Volume2 size={7} />
                    <Battery size={7} fill="#222" />
                    <time className="pl-[1px] text-right">12:29<br />16.05.2025</time>
                    <span className="-ml-[2px] flex size-[7px] items-center justify-center rounded-full bg-[#4a6580] text-[4px] text-white">5</span>
                </div>
            </footer>
        </div>
    );
}
